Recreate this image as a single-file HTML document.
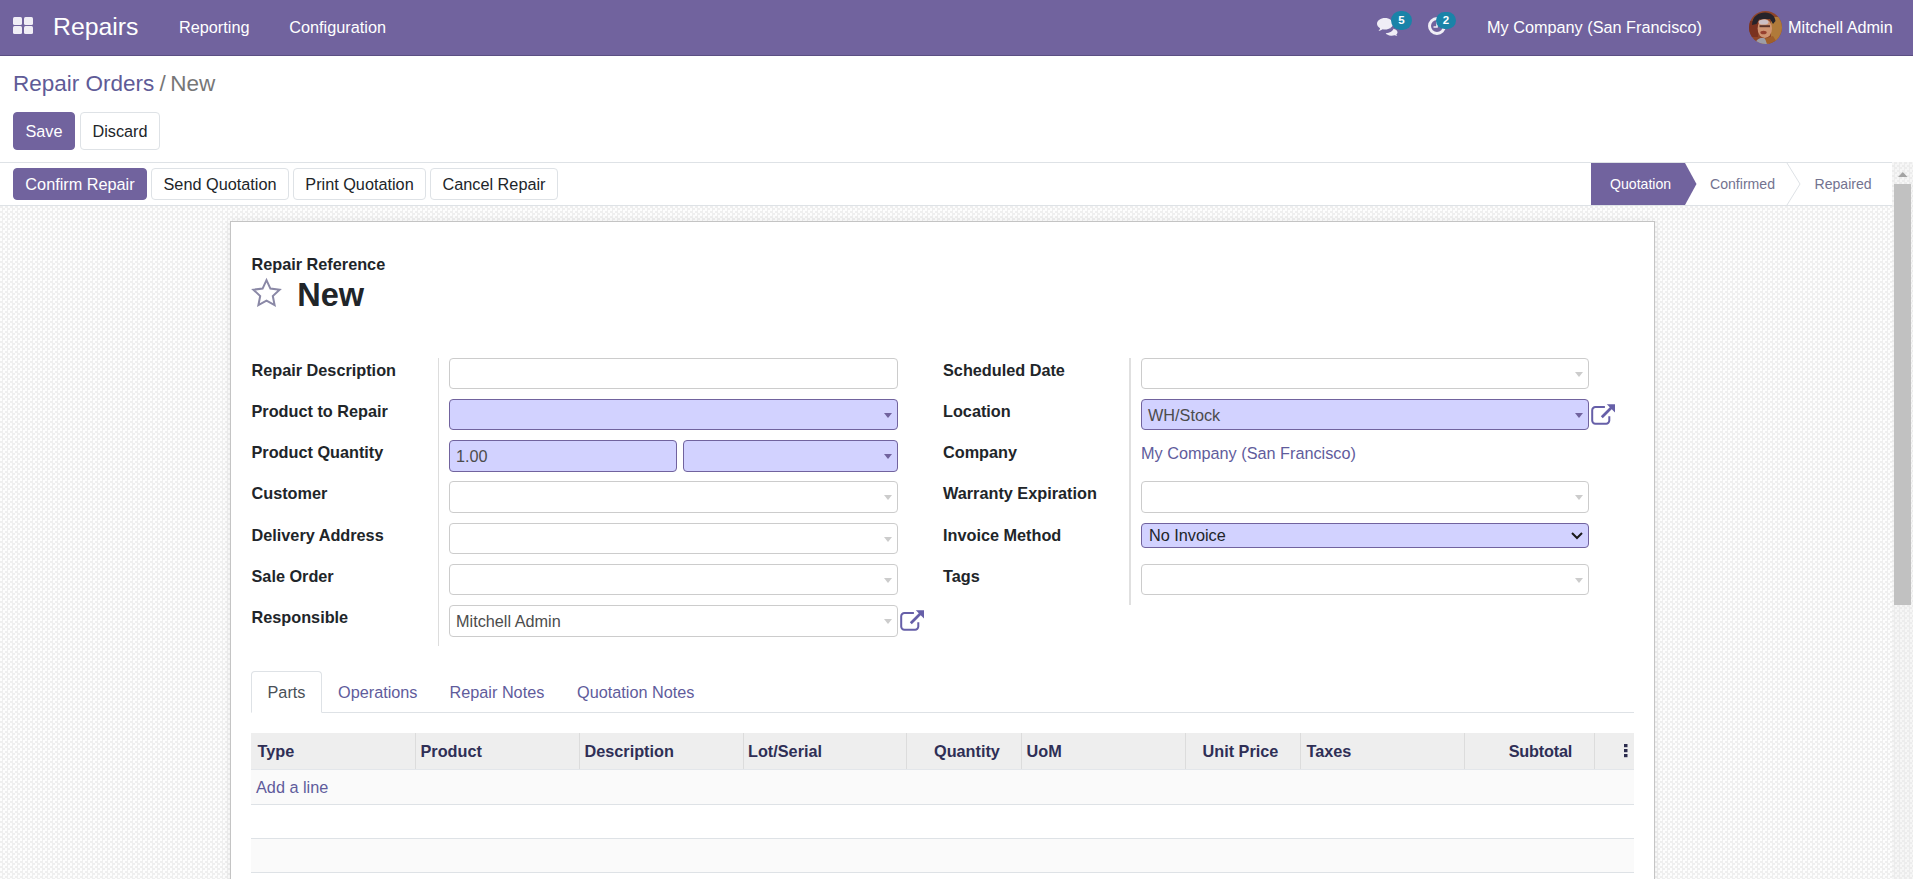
<!DOCTYPE html>
<html lang="en">
<head>
<meta charset="utf-8">
<title>Odoo - Repair Orders / New</title>
<style>
*{box-sizing:border-box;margin:0;padding:0}
html,body{width:1913px;height:879px;overflow:hidden;background:#fff}
body{font-family:"Liberation Sans",sans-serif;font-size:16.25px;color:#4c4c4c;position:relative;line-height:24.375px}
.abs{position:absolute}
svg{position:absolute;overflow:visible}
/* navbar */
#nav{position:absolute;left:0;top:0;width:1913px;height:56px;background:#71639e;border-bottom:1px solid #5b4f83;color:#fff}
#nav .t{position:absolute;white-space:nowrap;color:#fff;top:15.2px}
.apps{position:absolute;left:13px;top:17px;width:20px;height:17px}
.apps i{position:absolute;width:9px;height:8px;background:#f0eef6;border-radius:1.5px}
.badge{position:absolute;border-radius:10px;background:#1a83a8;color:#fff;font-weight:bold;font-size:11.5px;line-height:17px;text-align:center}
/* control panel */
#cp{position:absolute;left:0;top:56px;width:1913px;height:107px;background:#fff;border-bottom:1px solid #dee2e6}
.btn{position:absolute;height:38px;line-height:36px;border:1px solid #dee2e6;border-radius:4px;background:#fff;color:#212529;text-align:center;white-space:nowrap}
.btn.pri{background:#71639e;border-color:#71639e;color:#fff}
.btn.sm{height:32px;line-height:30px}
/* content */
#content{position:absolute;left:0;top:163px;width:1892px;height:716px;background:conic-gradient(#efefef 25%,#fdfdfd 0 50%,#efefef 0 75%,#fdfdfd 0) 0 0/5px 5px}
#sb{position:absolute;left:0;top:163px;width:1892px;height:43px;background:#fff;border-bottom:1px solid #dee2e6}
.st{position:absolute;top:163.4px;height:42px;line-height:42px;font-size:14.1px;white-space:nowrap;color:#737390}
#sheet{position:absolute;left:230px;top:221px;width:1425px;height:700px;background:#fff;border:1px solid #c4c4c4;box-shadow:0 0 7px rgba(0,0,0,.08)}
.lbl{position:absolute;font-weight:bold;color:#212529;white-space:nowrap}
.inp{position:absolute;height:31px;border:1px solid #ccc;border-radius:4px;background:#fff;line-height:24.375px;padding:2.5px 0 0 6px;color:#4c4c4c;white-space:nowrap}
.inp.req{background:#d2d2ff;border-color:#71639e}
.caret{position:absolute;right:4.8px;top:12.8px;width:0;height:0;border-left:4.75px solid transparent;border-right:4.75px solid transparent;border-top:5.5px solid #ccc}
.req .caret{border-top-color:#71639e}
.vsep{position:absolute;width:1px;background:#ddd}
.tab{position:absolute;top:680.4px;white-space:nowrap;color:#5f5c9c}
.th{position:absolute;top:739px;font-weight:bold;color:#2f2f56;white-space:nowrap}
.cs{position:absolute;top:733px;width:1px;height:36px;background:#dcdcdc}
.row{position:absolute;left:251px;width:1383px;height:34px;border-bottom:1px solid #dee2e6}
/* scrollbar */
#scroll{position:absolute;left:1892px;top:162px;width:21px;height:717px;background:conic-gradient(#ececec 25%,#f6f6f6 0 50%,#ececec 0 75%,#f6f6f6 0) 0 0/5px 5px}
#scroll .thumb{position:absolute;left:2px;top:22px;width:17px;height:421px;background:#c1c1c1}
</style>
</head>
<body>
<div id="nav">
  <div class="apps"><i style="left:0;top:0"></i><i style="left:11px;top:0"></i><i style="left:0;top:9px"></i><i style="left:11px;top:9px"></i></div>
  <span class="t" style="left:53px;top:12px;font-size:24.8px;line-height:30px">Repairs</span>
  <span class="t" style="left:179px">Reporting</span>
  <span class="t" style="left:289.3px">Configuration</span>

  <!-- comments icon -->
  <svg style="left:1377px;top:18px" width="21" height="18" viewBox="0 0 21 18">
    <path d="M12.5 10.5C16 10.5 20.5 11.5 20.5 14.2C20.5 15.2 20 16 19.2 16.6L20.3 18L17.6 17.3C16.5 17.7 15 17.8 14 17.7C11.5 17.5 9.5 16.6 8.7 15.3C13 15 16 13 16.5 10.8Z" fill="#f0eef6"/>
    <path d="M8 0C12.4 0 16 2.5 16 5.8C16 9 12.4 11.6 8 11.6C7.2 11.6 6.4 11.5 5.7 11.3C4.6 12.2 3.2 12.8 1.5 12.9C2.3 12.2 2.9 11.3 3.1 10.3C1.2 9.2 0 7.6 0 5.8C0 2.5 3.6 0 8 0Z" fill="#f0eef6"/>
  </svg>
  <div class="badge" style="left:1391px;top:11px;width:21px;height:19px;line-height:19px;text-indent:0">5</div>
  <!-- clock icon -->
  <svg style="left:1428px;top:17px" width="18" height="18" viewBox="0 0 18 18">
    <circle cx="9" cy="9" r="7.5" fill="none" stroke="#f0eef6" stroke-width="3"/>
    <path d="M9 4.5V10H5.5" fill="none" stroke="#f0eef6" stroke-width="1.6"/>
  </svg>
  <div class="badge" style="left:1436px;top:11.5px;width:20px;height:17px;line-height:17px">2</div>
  <!-- avatar -->
  <svg style="left:1749px;top:10.5px" width="33" height="33" viewBox="0 0 33 33">
    <defs><clipPath id="av"><circle cx="16.5" cy="16.5" r="16.5"/></clipPath></defs>
    <g clip-path="url(#av)">
      <rect width="33" height="33" fill="#8e4427"/>
      <rect x="22" y="6" width="11" height="24" fill="#b07a3a"/>
      <rect x="0" y="10" width="9" height="16" fill="#7a3220"/>
      <path d="M3 14C3 5 10 1.5 16 1.5C22 1.5 26 5 26.5 10L24 13L21 8L10 8.5L7.5 13Z" fill="#26232a"/>
      <ellipse cx="15.8" cy="17.5" rx="7.2" ry="9.6" fill="#cf9472"/>
      <ellipse cx="14.5" cy="11" rx="5" ry="2.6" fill="#cdbfc4"/>
      <rect x="10.5" y="14.2" width="10.5" height="2" fill="#5c342b"/>
      <ellipse cx="14.5" cy="21.5" rx="3.2" ry="1.8" fill="#96402f"/>
      <path d="M6 33C8 27 12 26.5 16 27.5L20 33Z" fill="#9d9da6"/>
      <path d="M16 27.5L24 25L29 33H18Z" fill="#a15f2a"/>
    </g>
  </svg>
  <span class="t" style="left:1487px">My Company (San Francisco)</span>
  <span class="t" style="left:1788px">Mitchell Admin</span>
</div>
<div id="cp">
  <span class="abs" style="left:13px;top:14px;font-size:22.5px;line-height:28px;white-space:nowrap;color:#5f5b97">Repair Orders<span style="color:#777;margin:0 4.3px 0 5.3px">/</span><span style="color:#777">New</span></span>
  <div class="btn pri" style="left:13px;top:56px;width:62px">Save</div>
  <div class="btn" style="left:80px;top:56px;width:80px">Discard</div>
</div>
<div id="content"></div>
<div id="sb"></div>
<div class="btn pri sm" style="left:13px;top:168px;width:134px">Confirm Repair</div>
<div class="btn sm" style="left:151px;top:168px;width:138px">Send Quotation</div>
<div class="btn sm" style="left:293px;top:168px;width:133px">Print Quotation</div>
<div class="btn sm" style="left:430px;top:168px;width:128px">Cancel Repair</div>
<!-- statusbar -->
<svg style="left:1591px;top:163px" width="301" height="42" viewBox="0 0 301 42">
  <path d="M0 0H94L105.5 21L94 42H0Z" fill="#71639e"/>
  <path d="M196 0L209 21L196 42" fill="none" stroke="#dee2e6" stroke-width="1"/>
</svg>
<span class="st" style="left:1610px;color:#fff">Quotation</span>
<span class="st" style="left:1710px">Confirmed</span>
<span class="st" style="left:1814.5px">Repaired</span>

<div id="sheet"></div>
<span class="lbl" style="left:251.5px;top:252px">Repair Reference</span>
<svg style="left:251px;top:278px" width="31" height="30" viewBox="0 0 31 30"><path d="M15.5 2.2L19.4 10.6L28.6 11.7L21.8 18L23.6 27.1L15.5 22.6L7.4 27.1L9.2 18L2.4 11.7L11.6 10.6Z" fill="none" stroke="#8a88a6" stroke-width="2" stroke-linejoin="miter"/></svg>
<span class="abs" style="left:297.3px;top:276px;font-size:32.5px;line-height:39px;font-weight:bold;color:#212529">New</span>

<!-- left group -->
<span class="lbl" style="left:251.5px;top:358px">Repair Description</span>
<span class="lbl" style="left:251.5px;top:399px">Product to Repair</span>
<span class="lbl" style="left:251.5px;top:440px">Product Quantity</span>
<span class="lbl" style="left:251.5px;top:481px">Customer</span>
<span class="lbl" style="left:251.5px;top:523px">Delivery Address</span>
<span class="lbl" style="left:251.5px;top:564px">Sale Order</span>
<span class="lbl" style="left:251.5px;top:605px">Responsible</span>
<div class="vsep" style="left:438px;top:358px;height:288px"></div>
<div class="inp" style="left:449px;top:358px;width:449px"></div>
<div class="inp req" style="left:449px;top:399px;width:449px"><i class="caret"></i></div>
<div class="inp req" style="height:32px;left:449px;top:440px;width:228px">1.00</div>
<div class="inp req" style="height:32px;left:683px;top:440px;width:215px"><i class="caret"></i></div>
<div class="inp" style="height:32px;left:449px;top:481px;width:449px"><i class="caret"></i></div>
<div class="inp" style="left:449px;top:523px;width:449px"><i class="caret"></i></div>
<div class="inp" style="left:449px;top:564px;width:449px"><i class="caret"></i></div>
<div class="inp" style="height:32px;left:449px;top:605px;width:449px">Mitchell Admin<i class="caret"></i></div>

<!-- right group -->
<span class="lbl" style="left:943px;top:358px">Scheduled Date</span>
<span class="lbl" style="left:943px;top:399px">Location</span>
<span class="lbl" style="left:943px;top:440px">Company</span>
<span class="lbl" style="left:943px;top:481px">Warranty Expiration</span>
<span class="lbl" style="left:943px;top:523px">Invoice Method</span>
<span class="lbl" style="left:943px;top:564px">Tags</span>
<div class="vsep" style="left:1129px;top:358px;height:247px;width:2px;background:#e0e0e0"></div>
<div class="inp" style="left:1141px;top:358px;width:448px"><i class="caret"></i></div>
<div class="inp req" style="left:1141px;top:399px;width:448px">WH/Stock<i class="caret"></i></div>
<span class="abs" style="left:1141px;top:441px;color:#5f5c9c;white-space:nowrap">My Company (San Francisco)</span>
<div class="inp" style="height:32px;left:1141px;top:481px;width:448px"><i class="caret"></i></div>
<div class="inp req" style="left:1141px;top:523px;width:448px;height:25px;padding:0 0 0 7px;line-height:22px;color:#212529">No Invoice
  <svg style="right:5px;top:8px" width="12" height="8" viewBox="0 0 12 8"><path d="M1 1L6 6L11 1" fill="none" stroke="#1b1b1b" stroke-width="2"/></svg></div>
<div class="inp" style="left:1141px;top:564px;width:448px"><i class="caret"></i></div>

<svg style="left:1592px;top:404px" width="24" height="21" viewBox="0 0 24 21"><path d="M17.3 12.3V16.5A3.2 3.2 0 0 1 14.1 19.7H3.4A3.2 3.2 0 0 1 0.2 16.5V6.3A3.2 3.2 0 0 1 3.4 3.1H12.9" fill="none" stroke="#665fa8" stroke-width="2"/><path d="M9.8 13.2L19.5 3.5" fill="none" stroke="#665fa8" stroke-width="2.7"/><path d="M14.8 0.3H23V8.6Z" fill="#665fa8"/></svg>
<svg style="left:901px;top:610.3px" width="24" height="21" viewBox="0 0 24 21"><path d="M17.3 12.3V16.5A3.2 3.2 0 0 1 14.1 19.7H3.4A3.2 3.2 0 0 1 0.2 16.5V6.3A3.2 3.2 0 0 1 3.4 3.1H12.9" fill="none" stroke="#665fa8" stroke-width="2"/><path d="M9.8 13.2L19.5 3.5" fill="none" stroke="#665fa8" stroke-width="2.7"/><path d="M14.8 0.3H23V8.6Z" fill="#665fa8"/></svg>
<!-- notebook -->
<div class="abs" style="left:251px;top:712px;width:1383px;height:1px;background:#dee2e6"></div>
<div class="abs" style="left:251px;top:671px;width:71px;height:42px;border:1px solid #dee2e6;border-bottom-color:#fff;border-radius:4px 4px 0 0;background:#fff"></div>
<span class="tab" style="left:267.5px;color:#495057">Parts</span>
<span class="tab" style="left:338px">Operations</span>
<span class="tab" style="left:449.5px">Repair Notes</span>
<span class="tab" style="left:577px">Quotation Notes</span>

<!-- table -->
<div class="abs" style="left:251px;top:733px;width:1383px;height:37px;background:#eee;border-bottom:1px solid #e3e6ea"></div>
<i class="cs" style="left:415px"></i><i class="cs" style="left:579px"></i><i class="cs" style="left:743px"></i><i class="cs" style="left:906px"></i><i class="cs" style="left:1021px"></i><i class="cs" style="left:1185px"></i><i class="cs" style="left:1300px"></i><i class="cs" style="left:1464px"></i><i class="cs" style="left:1594px"></i>
<span class="th" style="left:257.5px">Type</span>
<span class="th" style="left:420.5px">Product</span>
<span class="th" style="left:584.5px">Description</span>
<span class="th" style="left:748px">Lot/Serial</span>
<span class="th" style="left:934px">Quantity</span>
<span class="th" style="left:1026.5px">UoM</span>
<span class="th" style="left:1202.5px">Unit Price</span>
<span class="th" style="left:1306.5px">Taxes</span>
<span class="th" style="left:1508.7px;letter-spacing:-0.2px">Subtotal</span>
<svg style="left:1624px;top:744px" width="4" height="14" viewBox="0 0 4 14"><rect x="0" y="0" width="3.5" height="3.2" fill="#2c2c4e"/><rect x="0" y="5" width="3.5" height="3.2" fill="#2c2c4e"/><rect x="0" y="10" width="3.5" height="3.2" fill="#2c2c4e"/></svg>
<div class="row" style="top:770px;height:35px;background:#fafafa"></div>
<div class="row" style="top:805px;height:34px"></div>
<div class="row" style="top:839px;background:#fafafa;height:34px"></div>
<span class="abs" style="left:256px;top:775px;color:#5f5c9c;white-space:nowrap">Add a line</span>

<div id="scroll"><div class="thumb"></div><svg style="left:5.7px;top:10px" width="10" height="5" viewBox="0 0 10 5"><path d="M0 5L4.8 0L9.6 5Z" fill="#a3a3a3"/></svg></div>
</body>
</html>
